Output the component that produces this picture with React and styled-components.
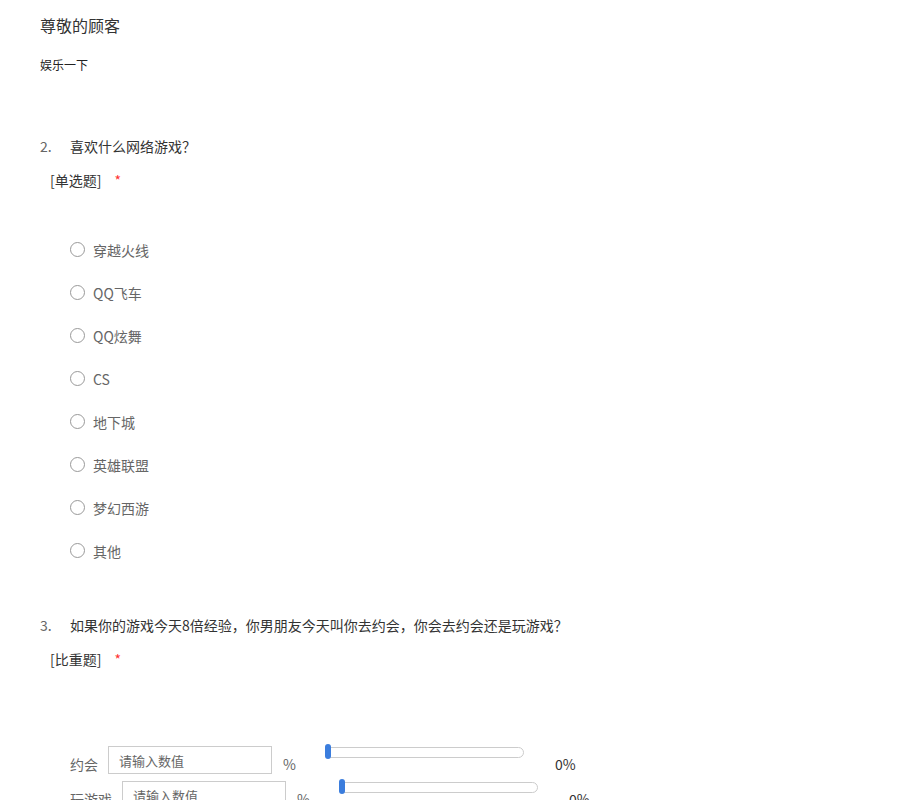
import React from "react";
import styled, { createGlobalStyle } from "styled-components";

const GlobalStyle = createGlobalStyle`
  body {
    margin: 0;
    background: #fff;
    font-family: "Noto Sans CJK SC", "Noto Sans", sans-serif;
    color: #333;
  }
`;

const Page = styled.div`
  padding: 13px 40px 0;
  width: 900px;
  box-sizing: border-box;
`;

const Title = styled.div`
  font-size: 16px;
  line-height: 24px;
  color: #333;
`;

const Intro = styled.div`
  margin-top: 18px;
  font-size: 12px;
  line-height: 20px;
  color: #222;
`;

const Question = styled.div`
  margin-top: ${(p) => p.$gap}px;
`;

const QuestionTitle = styled.div`
  display: flex;
  font-size: 14px;
  line-height: 20px;
  color: #333;
`;

const Num = styled.span`
  width: 30px;
  color: #666;
`;

const TypeLine = styled.div`
  margin-top: 14px;
  padding-left: 10px;
  font-size: 14px;
  line-height: 20px;
  color: #333;
`;

const Star = styled.span`
  margin-left: 13px;
  color: #f33;
`;

const Options = styled.div`
  margin-top: 38px;
  padding-left: 30px;
`;

const Option = styled.label`
  display: flex;
  align-items: center;
  height: 43px;
  font-size: 14px;
  color: #666;
`;

const Radio = styled.span`
  width: 13px;
  height: 13px;
  border: 1px solid #999;
  border-radius: 50%;
  margin-right: 8px;
`;

const Rows = styled.div`
  margin-top: 70px;
  padding-left: 30px;
`;

const Row = styled.div`
  display: flex;
  align-items: flex-end;
  height: 35px;
  font-size: 14px;
  line-height: 20px;
  color: #666;
`;

const RowLabel = styled.span`
  margin-right: 10px;
`;

const NumberInput = styled.input`
  width: 164px;
  height: 28px;
  box-sizing: border-box;
  border: 1px solid #ccc;
  padding: 0 10px;
  font-family: inherit;
  font-size: 13px;
  outline: none;
  &::placeholder {
    color: #666;
  }
`;

const Unit = styled.span`
  margin-left: 11px;
`;

const Track = styled.div`
  position: relative;
  align-self: flex-start;
  margin: 8px 31px 0 29px;
  width: 199px;
  height: 11px;
  box-sizing: border-box;
  border: 1px solid #ccc;
  border-radius: 6px;
`;

const Thumb = styled.span`
  position: absolute;
  left: -1px;
  top: -4px;
  width: 6px;
  height: 15px;
  border-radius: 3px;
  background: #3b7ddd;
`;

const Percent = styled.span`
  color: #333;
`;

const games = ["穿越火线", "QQ飞车", "QQ炫舞", "CS", "地下城", "英雄联盟", "梦幻西游", "其他"];
const choices = ["约会", "玩游戏"];

export default function App() {
  return (
    <>
      <GlobalStyle />
      <Page>
        <Title>尊敬的顾客</Title>
        <Intro>娱乐一下</Intro>

        <Question $gap={61}>
          <QuestionTitle>
            <Num>2.</Num>喜欢什么网络游戏？
          </QuestionTitle>
          <TypeLine>
            [单选题]<Star>*</Star>
          </TypeLine>
          <Options>
            {games.map((g) => (
              <Option key={g}>
                <Radio />
                {g}
              </Option>
            ))}
          </Options>
        </Question>

        <Question $gap={43}>
          <QuestionTitle>
            <Num>3.</Num>如果你的游戏今天8倍经验，你男朋友今天叫你去约会，你会去约会还是玩游戏？
          </QuestionTitle>
          <TypeLine>
            [比重题]<Star>*</Star>
          </TypeLine>
          <Rows>
            {choices.map((c) => (
              <Row key={c}>
                <RowLabel>{c}</RowLabel>
                <NumberInput placeholder="请输入数值" />
                <Unit>%</Unit>
                <Track>
                  <Thumb />
                </Track>
                <Percent>0%</Percent>
              </Row>
            ))}
          </Rows>
        </Question>
      </Page>
    </>
  );
}
